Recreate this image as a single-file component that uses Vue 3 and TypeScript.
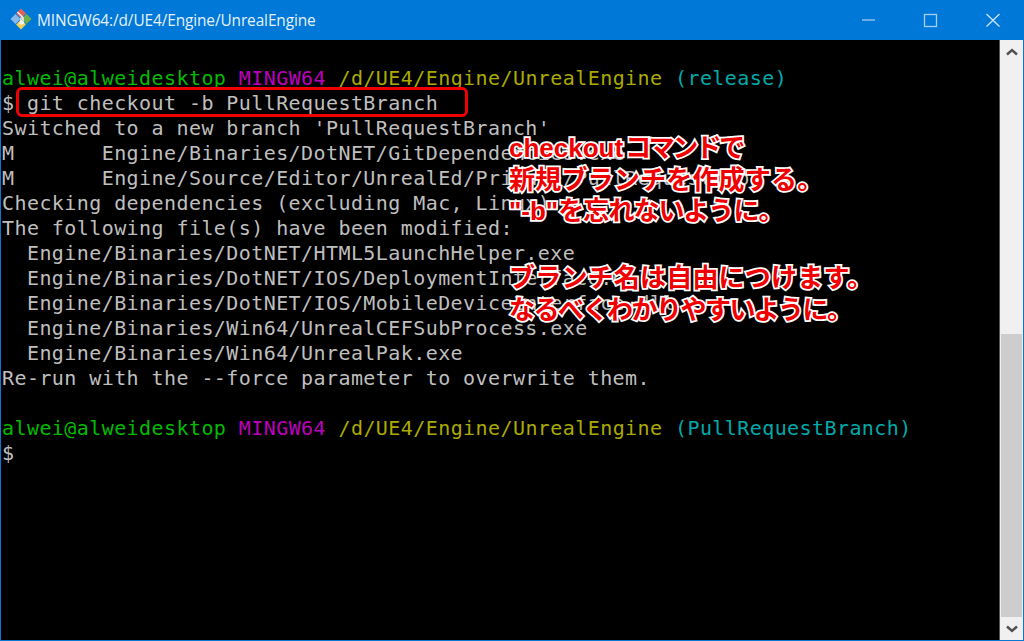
<script setup lang="ts">
interface Seg { t: string; c?: string }
const lines: Seg[][] = [
  [],
  [{ t: 'alwei@alweidesktop', c: 'g' }, { t: ' ' }, { t: 'MINGW64', c: 'm' }, { t: ' ' }, { t: '/d/UE4/Engine/UnrealEngine', c: 'y' }, { t: ' ' }, { t: '(release)', c: 'c' }],
  [{ t: '$ git checkout -b PullRequestBranch' }],
  [{ t: "Switched to a new branch 'PullRequestBranch'" }],
  [{ t: 'M       Engine/Binaries/DotNET/GitDependencies.exe' }],
  [{ t: 'M       Engine/Source/Editor/UnrealEd/Private/PullRequest.cpp' }],
  [{ t: 'Checking dependencies (excluding Mac, Linux)...' }],
  [{ t: 'The following file(s) have been modified:' }],
  [{ t: '  Engine/Binaries/DotNET/HTML5LaunchHelper.exe' }],
  [{ t: '  Engine/Binaries/DotNET/IOS/DeploymentInterface.dll' }],
  [{ t: '  Engine/Binaries/DotNET/IOS/MobileDeviceInterface.dll' }],
  [{ t: '  Engine/Binaries/Win64/UnrealCEFSubProcess.exe' }],
  [{ t: '  Engine/Binaries/Win64/UnrealPak.exe' }],
  [{ t: 'Re-run with the --force parameter to overwrite them.' }],
  [],
  [{ t: 'alwei@alweidesktop', c: 'g' }, { t: ' ' }, { t: 'MINGW64', c: 'm' }, { t: ' ' }, { t: '/d/UE4/Engine/UnrealEngine', c: 'y' }, { t: ' ' }, { t: '(PullRequestBranch)', c: 'c' }],
  [{ t: '$' }],
]
</script>

<template>
  <div class="window">
    <header class="titlebar">
      <svg class="logo" width="22" height="22" viewBox="0 0 22 22">
        <path d="M11 .5l5 5-5 5-5-5z" fill="#e0605a" />
        <path d="M5.5 6l5 5-5 5-5-5z" fill="#8ab8ee" />
        <path d="M16.5 6l5 5-5 5-5-5z" fill="#6fb04a" />
        <path d="M11 11.500l5 5-5 5-5-5z" fill="#f2cf55" />
        <path d="M7.500 4l5.500 5.500v5M11 9.500v5" stroke="#f4f4f4" stroke-width="1.5" fill="none" />
        <circle cx="11" cy="15" r="1.700" fill="#f4f4f4" />
        <circle cx="13" cy="15" r="1.300" fill="#f4f4f4" />
      </svg>
      <span class="title">MINGW64:/d/UE4/Engine/UnrealEngine</span>
      <div class="controls">
        <svg width="62" height="40" viewBox="0 0 62 40"><path d="M24 20h13" stroke="#a5cdf0" stroke-width="1.300" /></svg>
        <svg width="62" height="40" viewBox="0 0 62 40"><rect x="24.500" y="14.500" width="12" height="12" fill="none" stroke="#a5cdf0" stroke-width="1.300" /></svg>
        <svg width="62" height="40" viewBox="0 0 62 40"><path d="M24.500 14l13 12.500M37.500 14l-13 12.500" stroke="#cfe3f6" stroke-width="1.300" /></svg>
      </div>
    </header>
    <div class="body">
      <main class="term">
        <div v-for="(line, i) in lines" :key="i" class="line"><span v-for="(s, j) in line" :key="j" :class="s.c">{{ s.t }}</span></div>
        <div class="mark"></div>
        <div class="note note-a">
          <div class="a1"><span class="lat">checkout</span>コマンドで</div>
          <div class="a2">新規ブランチを作成する。</div>
          <div class="a3"><span class="lat">"-b"</span>を忘れないように。</div>
        </div>
        <div class="note note-b">
          <div class="b1">ブランチ名は自由につけます。</div>
          <div class="b2">なるべくわかりやすいように。</div>
        </div>
      </main>
      <aside class="scrollbar">
        <div class="arrow"><svg width="14" height="10" viewBox="0 0 14 10"><path d="M2 7.500l5-4.500 5 4.500" fill="none" stroke="#505050" stroke-width="2.400" /></svg></div>
        <div class="track"><div class="thumb"></div></div>
        <div class="arrow"><svg width="14" height="10" viewBox="0 0 14 10"><path d="M2 2.500l5 4.500 5-4.500" fill="none" stroke="#505050" stroke-width="2.400" /></svg></div>
      </aside>
    </div>
  </div>
</template>

<style>
body { margin: 0; background: #000; overflow: hidden; }
</style>

<style scoped>
.window {
  width: 1024px;
  height: 641px;
  box-sizing: border-box;
  display: flex;
  flex-direction: column;
  border: 1px solid #0a78d2;
  border-top: 0;
  background: #000;
}
.titlebar {
  height: 40px;
  flex: none;
  margin: 0 -1px;
  background: #0078d7;
  display: flex;
  align-items: center;
  padding-left: 10px;
  font-family: "Open Sans", "Noto Sans", sans-serif;
}
.logo { flex: none; margin-top: -2px; }
.title { margin-left: 5px; font-size: 15.4px; color: #e6f1fb; letter-spacing: -0.1px; }
.controls { margin-left: auto; display: flex; }
.controls svg { display: block; }
.body { flex: 1; display: flex; min-height: 0; }
.term {
  position: relative;
  flex: 1;
  padding: 1px 0 0 1px;
  font-family: "DejaVu Sans Mono", "Liberation Mono", monospace;
  font-size: 20px;
  letter-spacing: 0.42px;
  line-height: 25px;
  color: #bfbfbf;
  overflow: hidden;
  white-space: pre;
}
.line { height: 25px; }
.g { color: #00bb00; }
.m { color: #bb00bb; }
.y { color: #aaaa00; }
.c { color: #00aaaa; }
.mark {
  position: absolute;
  left: 15px;
  top: 47px;
  width: 446px;
  height: 24px;
  border: 3px solid #f00000;
  border-radius: 6px;
}
.note {
  position: absolute;
  left: 508px;
  font-family: "Liberation Sans", "Noto Sans CJK JP", sans-serif;
  font-size: 26px;
  line-height: 31.500px;
  font-weight: 700;
  color: #f00000;
  letter-spacing: 0;
  -webkit-text-stroke: 3.500px #fff;
  paint-order: stroke fill;
}
.note-a { top: 93px; }
.note-b { top: 223px; }
.lat { letter-spacing: 0; }
.a1 { letter-spacing: -2.500px; }
.a1 .lat { margin-right: 2px; }
.a2 { letter-spacing: 0.2px; }
.a3 { letter-spacing: -0.900px; }
.b1 { letter-spacing: 0.2px; }
.b2 { letter-spacing: -1.500px; }
.scrollbar {
  width: 23px;
  flex: none;
  display: flex;
  flex-direction: column;
  background: #f0f0f0;
  border-left: 1px solid #555;
}
.arrow { height: 23px; flex: none; display: flex; align-items: center; justify-content: center; }
.track { flex: 1; display: flex; flex-direction: column; justify-content: flex-end; }
.thumb { height: 283px; margin: 0 1px; background: #cdcdcd; }
</style>
